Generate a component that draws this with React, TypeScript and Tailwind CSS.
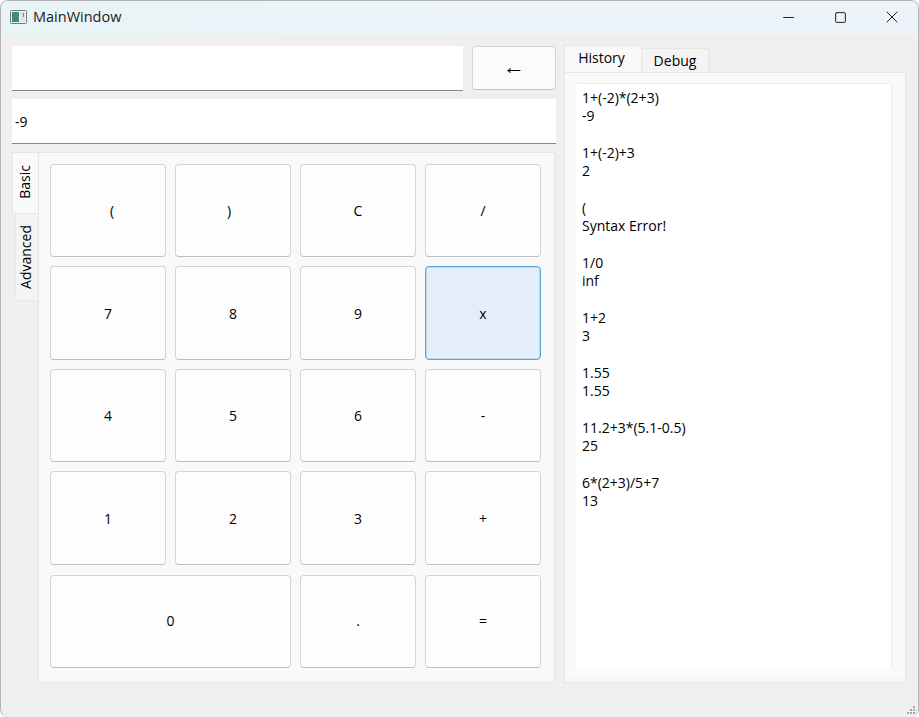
import clsx from 'clsx';
import { Minus, Square, X } from 'lucide-react';

const history = [
  ['1+(-2)*(2+3)', '-9'],
  ['1+(-2)+3', '2'],
  ['(', 'Syntax Error!'],
  ['1/0', 'inf'],
  ['1+2', '3'],
  ['1.55', '1.55'],
  ['11.2+3*(5.1-0.5)', '25'],
  ['6*(2+3)/5+7', '13'],
];

const keys = ['(', ')', 'C', '/', '7', '8', '9', 'x', '4', '5', '6', '-', '1', '2', '3', '+'];

function Key({ label, wide, active, last }: { label: string; wide?: boolean; active?: boolean; last?: boolean }) {
  return (
    <button
      className={clsx(
        'flex items-center justify-center rounded-[4px] border text-[14px] text-black',
        active
          ? 'border-[#58a4de] bg-[#e3eef8] shadow-[inset_0_0_0_1px_#bcd8ef]'
          : 'border-[#d4d4d4] border-b-[#bfbfbf] bg-[#fdfdfd]',
        wide && 'col-span-2',
        last && 'mt-px pb-[2px]',
        label === '(' && 'pl-2',
        label === ')' && 'pr-2',
      )}
    >
      {label}
    </button>
  );
}

export default function App() {
  return (
    <div className="h-[717px] w-[919px] overflow-hidden bg-white font-['Open_Sans','Noto_Sans',sans-serif] text-[14px] text-black">
      <div className="relative flex h-full flex-col overflow-hidden rounded-[8px] border-t border-l border-r border-[#b4b4b4] bg-[#efefef]">
        {/* Title bar */}
        <div className="flex h-[34px] shrink-0 items-center bg-gradient-to-r from-[#e9f4f7] to-[#edf3f9] pb-[2px] pl-[9px]">
          <svg width="18" height="16" viewBox="0 0 18 16" className="mr-[5px]">
            <rect x="0.5" y="1.5" width="16" height="13" rx="1" fill="#f4f6f6" stroke="#6d7a7d" />
            <rect x="2" y="3" width="7" height="10" fill="#3f8a7e" />
            <rect x="10" y="3" width="5" height="10" fill="#dfe4e4" />
            <rect x="13" y="4" width="1" height="4" fill="#4ea06a" />
          </svg>
          <span className="text-[14.5px] text-[#1b1b1b]">MainWindow</span>
          <div className="ml-auto flex items-center">
            <div className="flex w-[52px] justify-center">
              <Minus size={17} strokeWidth={1} absoluteStrokeWidth color="#222" />
            </div>
            <div className="flex w-[52px] justify-center">
              <Square size={13} strokeWidth={1} absoluteStrokeWidth color="#222" />
            </div>
            <div className="flex w-[52px] justify-center">
              <X size={20} strokeWidth={1} absoluteStrokeWidth color="#222" />
            </div>
          </div>
        </div>

        {/* Body */}
        <div className="flex pl-[11px] pt-[10px]">
          <div className="flex w-[544px] flex-col pt-[1px]">
            <div className="flex h-[45px] gap-[9px]">
              <div className="w-[451px] border-b border-[#868686] bg-white" />
              <button className="flex h-[44px] w-[84px] items-center justify-center rounded-[4px] border border-[#d6d6d6] border-b-[#c2c2c2] bg-[#fbfbfb] pb-[6px] text-[22px] leading-none">
                ←
              </button>
            </div>
            <div className="mt-2 flex h-[45px] items-center border-b border-[#868686] bg-white pl-[3px]">-9</div>

            {/* Keypad */}
            <div className="mt-2 flex h-[531px]">
              <div className="flex w-[26px] shrink-0 flex-col">
                <div className="flex h-[61px] items-center justify-center border-t border-l border-[#e6e6e6] bg-[#fafafa] pb-[3px] pr-[3px]">
                  <span className="rotate-180 [writing-mode:vertical-rl]">Basic</span>
                </div>
                <div className="ml-[3px] flex h-[88px] items-center justify-center border border-r-0 border-[#e8e8e8] bg-[#f4f4f4] pr-[3px]">
                  <span className="rotate-180 [writing-mode:vertical-rl]">Advanced</span>
                </div>
              </div>
              <div className="w-[517px] border border-[#e6e6e6] bg-[#f9f9f9] pl-[11px] pt-[11px]">
                <div className="grid w-[491px] grid-cols-4 grid-rows-[93px_94px_93px_94px_94px] gap-x-[9px] gap-y-[9px]">
                  {keys.map((k) => (
                    <Key key={k} label={k} active={k === 'x'} />
                  ))}
                  <Key label="0" wide last />
                  <Key label="." last />
                  <Key label="=" last />
                </div>
              </div>
            </div>
          </div>

          {/* Right tabs */}
          <div className="ml-[8px] flex w-[342px] flex-col">
            <div className="flex h-[27px] items-end">
              <div className="flex h-[27px] w-[78px] items-center justify-center border-t border-l border-r border-[#e6e6e6] bg-[#f9f9f9] pb-[3px] pr-[3px]">
                History
              </div>
              <div className="flex h-[24px] w-[67px] items-center justify-center border-t border-r border-[#e6e6e6] bg-[#f4f4f4]">
                Debug
              </div>
            </div>
            <div className="h-[611px] border border-[#e6e6e6] bg-[#f9f9f9] pl-[11px] pt-[10px]">
              <div className="h-[586px] w-[316px] rounded-[2px] border-t border-r border-[#eeeeee] bg-white pl-[6px] pt-[5px] leading-[18.33px]">
                {history.map(([expr, res]) => (
                  <div key={expr} className="mb-[18.33px]">
                    <div>{expr}</div>
                    <div>{res}</div>
                  </div>
                ))}
              </div>
              <div className="-ml-[11px] mt-[9px] h-px bg-[#f0f0f0]" />
            </div>
          </div>
        </div>

        {/* Size grip */}
        <svg width="12" height="12" viewBox="0 0 12 12" className="absolute bottom-[1px] right-[1px]" fill="#a8a8a8">
          <rect x="8" y="2" width="2" height="2" />
          <rect x="5" y="5" width="2" height="2" />
          <rect x="8" y="5" width="2" height="2" />
          <rect x="2" y="8" width="2" height="2" />
          <rect x="5" y="8" width="2" height="2" />
          <rect x="8" y="8" width="2" height="2" />
        </svg>
      </div>
    </div>
  );
}
